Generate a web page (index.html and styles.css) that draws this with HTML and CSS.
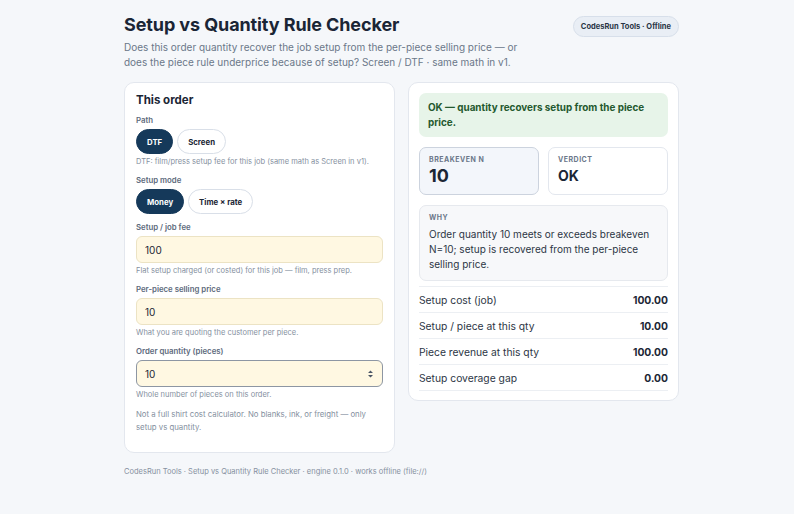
FILE: index.html
```html
<!DOCTYPE html>
<html lang="en">
  <head>
    <meta charset="UTF-8" />
    <meta name="viewport" content="width=device-width, initial-scale=1.0" />
    <title>Setup vs Quantity Rule Checker</title>
    <link rel="stylesheet" href="styles.css">
  </head>
  <body>
    <main class="page">
      <header class="head">
        <div class="head__text">
          <h1 class="head__title">Setup vs Quantity Rule Checker</h1>
          <p class="head__sub">Does this order quantity recover the job setup from the per-piece selling price — or does the piece rule underprice because of setup? Screen / DTF · same math in v1.</p>
        </div>
        <span class="badge">CodesRun Tools · Offline</span>
      </header>

      <div class="grid">
        <section class="card">
          <h2 class="card__title">This order</h2>

          <div class="field">
            <div class="field__label">Path</div>
            <div class="pills">
              <button class="pill pill--on">DTF</button>
              <button class="pill">Screen</button>
            </div>
            <div class="hint">DTF: film/press setup fee for this job (same math as Screen in v1).</div>
          </div>

          <div class="field">
            <div class="field__label">Setup mode</div>
            <div class="pills">
              <button class="pill pill--on">Money</button>
              <button class="pill">Time × rate</button>
            </div>
          </div>

          <div class="field">
            <label class="field__label">Setup / job fee</label>
            <input class="input" type="text" value="100" />
            <div class="hint">Flat setup charged (or costed) for this job — film, press prep.</div>
          </div>

          <div class="field">
            <label class="field__label">Per-piece selling price</label>
            <input class="input" type="text" value="10" />
            <div class="hint">What you are quoting the customer per piece.</div>
          </div>

          <div class="field">
            <label class="field__label">Order quantity (pieces)</label>
            <div class="input input--focus">
              <span>10</span>
              <svg class="spin" width="7" height="10" viewBox="0 0 7 10"><path d="M1 4 L3.5 1.5 L6 4 Z M1 6 L3.5 8.5 L6 6 Z" fill="#4a5565"/></svg>
            </div>
            <div class="hint">Whole number of pieces on this order.</div>
          </div>

          <p class="note">Not a full shirt cost calculator. No blanks, ink, or freight — only setup vs quantity.</p>
        </section>

        <section class="card card--result">
          <div class="status">OK — quantity recovers setup from the piece price.</div>

          <div class="stats">
            <div class="stat stat--main">
              <div class="stat__label">Breakeven N</div>
              <div class="stat__value">10</div>
            </div>
            <div class="stat">
              <div class="stat__label">Verdict</div>
              <div class="stat__value">OK</div>
            </div>
          </div>

          <div class="why">
            <div class="stat__label">Why</div>
            <p class="why__text">Order quantity 10 meets or exceeds breakeven N=10; setup is recovered from the per-piece selling price.</p>
          </div>

          <div class="rows">
            <div class="row"><span>Setup cost (job)</span><b>100.00</b></div>
            <div class="row"><span>Setup / piece at this qty</span><b>10.00</b></div>
            <div class="row"><span>Piece revenue at this qty</span><b>100.00</b></div>
            <div class="row"><span>Setup coverage gap</span><b>0.00</b></div>
          </div>
        </section>
      </div>

      <footer class="foot">CodesRun Tools · Setup vs Quantity Rule Checker · engine 0.1.0 · works offline (file://)</footer>
    </main>
  </body>
</html>
```

FILE: styles.css
```css
html,
body {
  margin: 0;
  background: #f5f7fa;
  font-family: Inter, "Noto Sans", sans-serif;
  color: #1b2635;
}
.page {
  width: 555px;
  margin: 0 0 0 124px;
  padding-top: 14px;
}
.head {
  display: flex;
  justify-content: space-between;
  align-items: flex-start;
}
.head__text {
  width: 410px;
}
.head__title {
  margin: 0;
  font-size: 18px;
  font-weight: 700;
  line-height: 22px;
  letter-spacing: -0.1px;
  color: #1a2535;
}
.head__sub {
  margin: 4px 0 0;
  font-size: 10px;
  line-height: 15px;
  color: #6b7789;
}
.badge {
  margin-top: 2px;
  height: 21px;
  line-height: 19px;
  box-sizing: border-box;
  padding: 0 7px;
  border-radius: 999px;
  border: 1px solid #d7dfea;
  background: #e9eef5;
  font-size: 7.5px;
  font-weight: 700;
  color: #2a3545;
  white-space: nowrap;
}
.grid {
  display: grid;
  grid-template-columns: 1fr 1fr;
  gap: 13px;
  align-items: start;
  margin-top: 12px;
}
.card {
  background: #fff;
  border: 1px solid #e3e7ee;
  border-radius: 10px;
  padding: 10px 11px 18px;
}
.card--result {
  padding: 10px 10px 9px;
}
.card__title {
  margin: 0 0 8px;
  font-size: 11.5px;
  font-weight: 700;
  line-height: 14px;
}
.field {
  margin-bottom: 8px;
}
.field__label {
  display: block;
  font-size: 7.8px;
  font-weight: 600;
  color: #5d6a7c;
  margin-bottom: 4px;
  line-height: 10px;
}
.pills {
  display: flex;
  gap: 4px;
}
.pill {
  height: 25px;
  padding: 0 10px;
  border-radius: 999px;
  border: 1px solid #d9dfe8;
  background: #fff;
  font-family: inherit;
  font-size: 7.8px;
  font-weight: 700;
  color: #1b2635;
}
.pill--on {
  background: #15395a;
  border-color: #15395a;
  color: #fff;
}
.hint {
  margin-top: 3px;
  font-size: 7.5px;
  line-height: 10px;
  color: #8590a0;
}
.input {
  box-sizing: border-box;
  display: flex;
  align-items: center;
  justify-content: space-between;
  width: 100%;
  height: 27px;
  padding: 0 8px;
  border: 1px solid #ece3c4;
  border-radius: 6px;
  background: #fff8e2;
  font-family: inherit;
  font-size: 10px;
  color: #1b2635;
}
.input--focus {
  border: 1px solid #8d96a3;
}
.note {
  margin: 7px 0 0;
  font-size: 7.8px;
  line-height: 13px;
  color: #8590a0;
}
.status {
  background: #e7f4e9;
  border-radius: 7px;
  padding: 7px 9px;
  font-size: 9.9px;
  font-weight: 700;
  line-height: 15px;
  color: #24592f;
}
.stats {
  display: grid;
  grid-template-columns: 1fr 1fr;
  gap: 9px;
  margin-top: 10px;
}
.stat {
  border: 1px solid #e3e7ee;
  border-radius: 7px;
  padding: 8px 9px 0;
  height: 48px;
  box-sizing: border-box;
}
.stat--main {
  background: #f3f6fb;
  border-color: #ccd3de;
}
.stat__label {
  font-size: 7px;
  font-weight: 700;
  letter-spacing: 0.5px;
  text-transform: uppercase;
  color: #6b7789;
  line-height: 8px;
}
.stat__value {
  font-size: 14px;
  font-weight: 700;
  line-height: 20px;
  margin-top: 2px;
}
.stat--main .stat__value {
  font-size: 18px;
}
.why {
  margin-top: 10px;
  background: #f7f8fa;
  border: 1px solid #e6e9ee;
  border-radius: 7px;
  padding: 8px 9px 8px;
}
.why__text {
  margin: 5px 0 0;
  font-size: 10px;
  line-height: 15px;
  color: #2c3645;
}
.rows {
  margin-top: 5px;
}
.row {
  display: flex;
  justify-content: space-between;
  align-items: center;
  height: 25px;
  border-top: 1px solid #eceff3;
  font-size: 10.3px;
  color: #2c3645;
}
.row:last-child {
  border-bottom: 1px solid #eceff3;
}
.row b {
  color: #1b2635;
}
.foot {
  margin-top: 14px;
  font-size: 7.5px;
  line-height: 10px;
  color: #8590a0;
}
```
